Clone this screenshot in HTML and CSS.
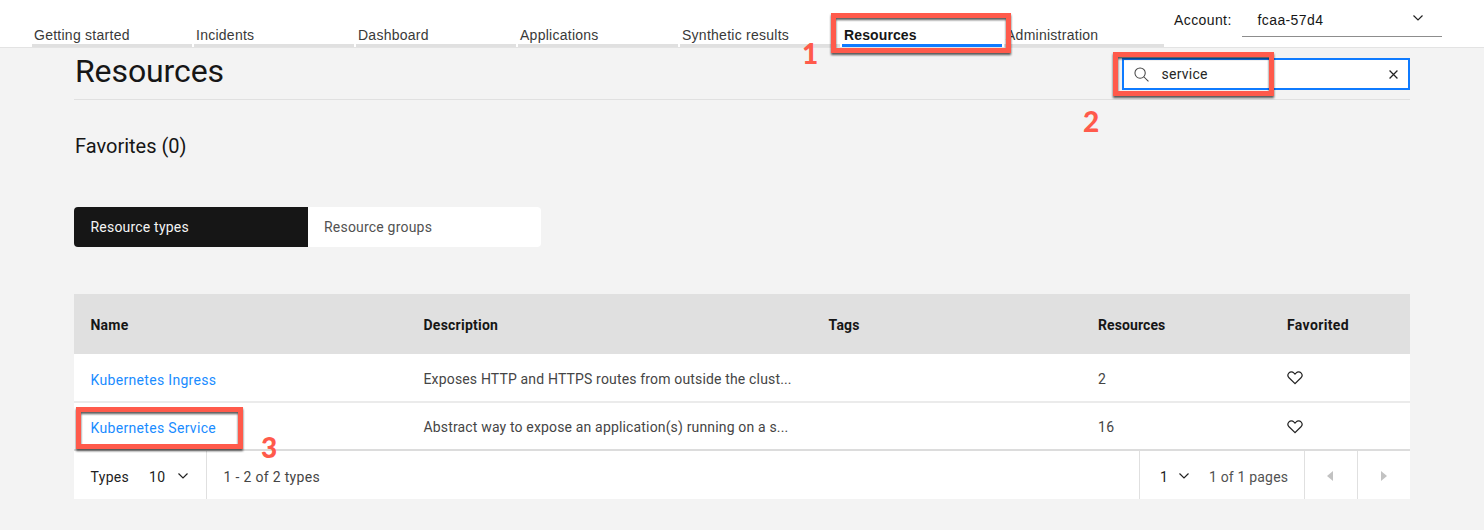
FILE: index.html
```html
<!DOCTYPE html>
<html lang="en">
<head>
<meta charset="utf-8">
<title>Resources</title>
<link rel="stylesheet" href="styles.css">
</head>
<body>
<header class="topbar">
  <nav class="tabs">
    <a class="tab">Getting started</a>
    <a class="tab">Incidents</a>
    <a class="tab">Dashboard</a>
    <a class="tab">Applications</a>
    <a class="tab">Synthetic results</a>
    <a class="tab tab-active">Resources</a>
    <a class="tab">Administration</a>
  </nav>
  <div class="account">
    <span class="account-label">Account:</span>
    <div class="account-select"><span>fcaa-57d4</span>
      <svg class="chevron" viewBox="0 0 10 6"><path d="M.5 .5 5 5 9.5 .5"/></svg>
    </div>
  </div>
</header>
<main class="page">
  <div class="page-head">
    <h1 class="title">Resources</h1>
    <div class="search">
      <svg class="search-icon" viewBox="0 0 16 16"><circle cx="6.5" cy="6.5" r="5.5"/><path d="M10.4 10.4 15.4 15.4"/></svg>
      <span class="search-text">service</span>
      <svg class="clear-icon" viewBox="0 0 8 8"><path d="M.5 .5l7 7M7.5 .5l-7 7"/></svg>
    </div>
  </div>
  <h2 class="favorites">Favorites (0)</h2>
  <div class="switcher">
    <div class="switch switch-on">Resource types</div>
    <div class="switch">Resource groups</div>
  </div>
  <section class="table">
    <div class="row row-head">
      <div>Name</div><div>Description</div><div>Tags</div><div class="th-res">Resources</div><div class="th-fav">Favorited</div>
    </div>
    <div class="row">
      <div class="link">Kubernetes Ingress</div><div class="desc">Exposes HTTP and HTTPS routes from outside the clust...</div><div></div><div>2</div>
      <div class="fav"><svg class="heart" viewBox="0 0 16 14"><path d="M8 12.6 2 6.8A3.55 3.55 0 0 1 2 1.9 3.3 3.3 0 0 1 6.8 1.9L8 3.1 9.2 1.9A3.3 3.3 0 0 1 14 1.9 3.55 3.55 0 0 1 14 6.8Z"/></svg></div>
    </div>
    <div class="row row-last">
      <div class="link">Kubernetes Service</div><div class="desc">Abstract way to expose an application(s) running on a s...</div><div></div><div>16</div>
      <div class="fav"><svg class="heart" viewBox="0 0 16 14"><path d="M8 12.6 2 6.8A3.55 3.55 0 0 1 2 1.9 3.3 3.3 0 0 1 6.8 1.9L8 3.1 9.2 1.9A3.3 3.3 0 0 1 14 1.9 3.55 3.55 0 0 1 14 6.8Z"/></svg></div>
    </div>
    <footer class="pager">
      <div class="page-size"><span class="types">Types</span><span class="size">10</span><svg class="chevron" viewBox="0 0 10 6"><path d="M.5 .5 5 5 9.5 .5"/></svg></div>
      <div class="range">1 - 2 of 2 types</div>
      <div class="page-pick"><span class="page-num">1</span><svg class="chevron" viewBox="0 0 10 6"><path d="M.5 .5 5 5 9.5 .5"/></svg><span class="pages">1 of 1 pages</span></div>
      <div class="step"><svg class="caret" viewBox="0 0 6 10"><path d="M6 0v10L0 5z"/></svg></div>
      <div class="step"><svg class="caret" viewBox="0 0 6 10"><path d="M0 0v10l6-5z"/></svg></div>
    </footer>
  </section>
</main>
<div class="mark mark-1"></div><div class="num num-1">1</div>
<div class="mark mark-2"></div><div class="num num-2">2</div>
<div class="mark mark-3"></div><div class="num num-3">3</div>
</body>
</html>
```
FILE: styles.css
```css
* { box-sizing: border-box; }
body {
  margin: 0;
  height: 530px;
  overflow: hidden;
  position: relative;
  background: #f3f3f3;
  color: #161616;
  font: 14px/18px Roboto, sans-serif;
  letter-spacing: .32px;
}
svg { display: block; flex: none; fill: none; stroke: #222; }

.topbar {
  display: flex;
  height: 48px;
  padding-left: 32px;
  background: #fff;
  border-bottom: 1px solid #e3e3e3;
  font-family: "Liberation Sans", Arial, sans-serif;
}
.tabs { display: flex; gap: 2px; align-items: flex-end; letter-spacing: .26px; }
.tab {
  width: 160px;
  height: 21px;
  padding-left: 2px;
  line-height: 18px;
  color: #393939;
  border-bottom: 3px solid #e0e0e0;
}
.tab-active { color: #161616; font-weight: 700; border-color: #0f7bff; letter-spacing: .12px; }
.account { display: flex; height: 37px; margin-left: 10px; }
.account-label { width: 68px; padding-top: 11px; letter-spacing: .4px; }
.account-select {
  display: flex;
  justify-content: space-between;
  width: 200px;
  padding: 11px 19px 0 15.5px;
  border-bottom: 1px solid #8d8d8d;
  letter-spacing: .4px;
}
.chevron { width: 10px; height: 6px; stroke-width: 1.2; }
.account-select .chevron { margin-top: 4px; }

.page { width: 1336px; margin-left: 74px; }
.page-head {
  display: flex;
  justify-content: space-between;
  height: 52px;
  border-bottom: 1px solid #e0e0e0;
}
.title { margin: 3px 0 0 1px; font-size: 32px; line-height: 40px; font-weight: 400; letter-spacing: -.1px; }
.search {
  display: flex;
  align-items: center;
  width: 288px;
  height: 32px;
  margin-top: 10px;
  padding: 0 10px;
  background: #fff;
  border: 2px solid #0f7bff;
}
.search-icon { width: 15px; height: 15px; stroke: #444; stroke-width: 1.1; }
.search-text { flex: 1; padding-left: 12.5px; color: #262626; letter-spacing: .25px; }
.clear-icon { width: 9px; height: 9px; stroke-width: 1.1; }
.favorites { margin: 33px 0 0 1px; font-size: 20px; line-height: 26px; font-weight: 400; letter-spacing: 0; }

.switcher { display: flex; width: 467px; height: 40px; margin-top: 48px; border-radius: 4px; overflow: hidden; background: #fff; }
.switch { flex: 1; padding: 0 16.5px; line-height: 41px; color: #525252; letter-spacing: .2px; }
.switch-on { background: #161616; color: #f4f4f4; }

.table { margin-top: 47px; background: #fff; }
.row {
  display: grid;
  grid-template-columns: 333px 405px 269.5px 189px 1fr;
  height: 48px;
  padding-left: 16.5px;
  line-height: 49px;
  color: #454545;
  border-bottom: 2px solid #ebebeb;
}
.row-head { height: 60px; line-height: 62px; background: #e0e0e0; color: #161616; font-weight: 700; letter-spacing: .24px; border: 0; }
.th-res { letter-spacing: .1px; }
.th-fav { letter-spacing: .36px; }
.row-head + .row { height: 49px; line-height: 50px; }
.row-last { border-color: #dcdcdc; }
.link { color: #1a8cff; padding-top: 1px; }
.desc { white-space: nowrap; letter-spacing: .16px; }
.fav { padding-top: 17px; }
.heart { width: 16px; height: 14px; stroke-width: 1.2; }

.pager { display: flex; height: 48px; line-height: 52px; color: #454545; }
.page-size { display: flex; width: 133px; padding-left: 16.5px; border-right: 1px solid #e0e0e0; color: #222; }
.pager .chevron { margin-top: 22px; }
.types { width: 58.5px; }
.size { width: 29px; }
.range { flex: 1; padding-left: 16.5px; }
.page-pick { display: flex; width: 165px; padding-left: 20px; border-left: 1px solid #e0e0e0; color: #222; }
.page-num { width: 19px; }
.pages { padding-left: 20px; color: #525252; white-space: nowrap; letter-spacing: .18px; }
.step { display: flex; width: 53px; padding: 20px 0 0 22px; border-left: 1px solid #e0e0e0; }
.step + .step { padding-left: 23px; }
.caret { width: 6px; height: 10px; fill: #c2c2c2; stroke: none; }

/* Callout frames and step numbers lying over the page */
.mark { position: absolute; border: 5px solid #ff5a4b; filter: drop-shadow(0 2px 1px rgba(0, 0, 0, .65)); }
.mark-1 { left: 831px; top: 13px; width: 180px; height: 40px; }
.mark-2 { left: 1113px; top: 52px; width: 161px; height: 44px; }
.mark-3 { left: 76px; top: 407px; width: 167px; height: 42px; }
.num { position: absolute; font: 900 28px/28px Lato, sans-serif; color: #ff5a4b; letter-spacing: 0; }
.num-1 { left: 802px; top: 39px; }
.num-2 { left: 1083px; top: 107px; }
.num-3 { left: 261px; top: 433px; }
```
